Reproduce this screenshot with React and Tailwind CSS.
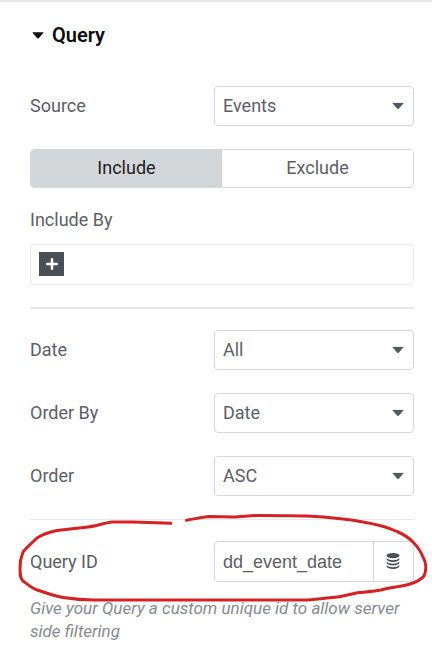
import React, { useState } from 'react';

const selects = [
  { id: 'date', label: 'Date', options: ['All', 'Past Day', 'Past Week', 'Past Month'] },
  { id: 'order-by', label: 'Order By', options: ['Date', 'Title', 'Menu Order', 'Random'] },
  { id: 'order', label: 'Order', options: ['ASC', 'DESC'] }
];

function Caret({ className }) {
  return (
    <svg viewBox="0 0 12 7" className={`w-3 h-[7px] ${className}`} fill="currentColor" aria-hidden="true">
      <path d="M1 0.3H11Q11.9 0.3 11.3 1.1L6.7 6.2Q6 6.9 5.3 6.2L0.7 1.1Q0.1 0.3 1 0.3Z" />
    </svg>
  );
}

function DatabaseIcon() {
  return (
    <svg viewBox="0 0 14 16" className="w-3.5 h-4" fill="currentColor" aria-hidden="true">
      <ellipse cx="7" cy="2.6" rx="6.5" ry="2.6" />
      <path d="M0.5 5.2Q2.8 7.2 7 7.2T13.5 5.2V6.1Q13 8.9 7 8.9T0.5 6.1Z" />
      <path d="M0.5 8.7Q2.8 10.7 7 10.7T13.5 8.7V9.6Q13 12.4 7 12.4T0.5 9.6Z" />
      <path d="M0.5 12.2Q2.8 14.2 7 14.2T13.5 12.2V13.1Q13 15.9 7 15.9T0.5 13.1Z" />
    </svg>
  );
}

function SelectRow({ id, label, options }) {
  const [value, setValue] = useState(options[0]);

  return (
    <div className="grid grid-cols-[minmax(0,23fr)_minmax(0,25fr)] items-center">
      <label htmlFor={id}>{label}</label>
      <div className="relative">
        <select
          id={id}
          value={value}
          onChange={(e) => setValue(e.target.value)}
          className="block w-full h-10 pl-2 pr-8 appearance-none rounded border border-[#d5d8dc] bg-white outline-none cursor-pointer"
        >
          {options.map((o) => <option key={o} value={o}>{o}</option>)}
        </select>
        <Caret className="absolute right-2.5 top-1/2 -translate-y-1/2 pointer-events-none text-[#515962]" />
      </div>
    </div>
  );
}

export default function App() {
  const [tab, setTab] = useState('Include');
  const [queryId, setQueryId] = useState('dd_event_date');

  return (
    <main className="border-t-2 border-[#e6e8ea] bg-white font-['Roboto','Liberation_Sans',sans-serif] text-lg leading-6 text-[#5c6066]">
      <div className="pl-[30px] pr-[18px] pt-[21px]">
        <h2 className="text-xl leading-6 font-semibold text-[#0c0d0e]">
          <button type="button" className="flex items-center gap-2 pl-0.5 cursor-pointer">
            <Caret className="text-[#0c0d0e]" />
            Query
          </button>
        </h2>

        <div className="pt-[39px]">
          <SelectRow id="source" label="Source" options={['Events', 'Posts', 'Pages']} />
        </div>

        <div className="mt-[23px] flex h-[39px] overflow-hidden rounded border border-[#d5d8dc]">
          {['Include', 'Exclude'].map((name) => (
            <button
              key={name}
              type="button"
              aria-pressed={tab === name}
              onClick={() => setTab(name)}
              className={`flex-1 pb-0.5 cursor-pointer ${tab === name ? 'bg-[#d2d6d9] text-[#1f2124]' : 'bg-white'}`}
            >
              {name}
            </button>
          ))}
        </div>

        <div className="pt-5">
          <span>Include By</span>
          <div className="mt-3 flex h-[41px] items-center rounded border border-[#e6e8ea] px-2 pb-px">
            <button type="button" aria-label="Add term" className="flex w-[25px] h-6 items-center justify-center bg-[#495157] text-white cursor-pointer">
              <svg viewBox="0 0 12 12" className="w-3 h-3" stroke="currentColor" strokeWidth="2.4" strokeLinecap="round" aria-hidden="true">
                <path d="M6 1.2V10.8M1.2 6H10.8" />
              </svg>
            </button>
          </div>
        </div>

        <hr className="mt-[22px] border-t-2 border-[#e6e8ea]" />

        <div className="flex flex-col gap-[23px] pt-[21px] pb-[23px]">
          {selects.map((s) => <SelectRow key={s.id} {...s} />)}
        </div>
      </div>

      <div className="relative pl-[30px] pr-[18px]">
        <hr className="border-t border-[#e6e8ea]" />
        <div className="mt-[21px] grid grid-cols-[minmax(0,23fr)_minmax(0,25fr)] items-center">
          <label htmlFor="query-id">Query ID</label>
          <div className="flex h-[41px] rounded border border-[#d5d8dc]">
            <input
              id="query-id"
              type="text"
              value={queryId}
              onChange={(e) => setQueryId(e.target.value)}
              className="min-w-0 flex-1 px-2 bg-transparent font-['Liberation_Sans',Arial,sans-serif] outline-none"
            />
            <button type="button" aria-label="Dynamic tags" className="flex w-10 items-center justify-center border-l border-[#d5d8dc] pr-0.5 pb-0.5 text-[#495157] cursor-pointer">
              <DatabaseIcon />
            </button>
          </div>
        </div>
        <p className="pt-[15px] pb-3.5 text-[17px] leading-[23px] italic text-[#858b91]">
          Give your Query a custom unique id to allow server side filtering
        </p>

        {/* hand-drawn marker around the Query ID field */}
        <svg
          viewBox="0 519 432 90"
          className="absolute inset-x-0 top-0 w-full overflow-visible pointer-events-none"
          fill="none"
          stroke="#d32224"
          strokeWidth="3"
          strokeLinecap="round"
          strokeLinejoin="round"
          aria-hidden="true"
        >
          <path d="M171 523.2L133 522H112C103 523 97 526 88 527L57 530.5C50 532 43 534 37 538C32 543 27 547 23 552C21 557 20 562 20 568C20 574 20 578 23 581C27 584 30 587 36 589.5C46 593 54 596 63 597.5C73 599 83 600 94 600H307C317 599.5 327 598 337 597C345 596 352 593.5 360 592.5C367 592 374 591 381 590C391 587 401 587 410 584C416 582 421 580 424 576C427 570 426 562 423 557C421 552 418 547 413 542C408 537 403 534 397 531.5C387 527 375 524 363 522C345 518.5 326 517 307 516C290 515.5 273 515.5 257 515.5C249 515.5 241 517 233 517L210 516.5C202 517 194 519 186.500 520.2" />
        </svg>
      </div>
    </main>
  );
}
